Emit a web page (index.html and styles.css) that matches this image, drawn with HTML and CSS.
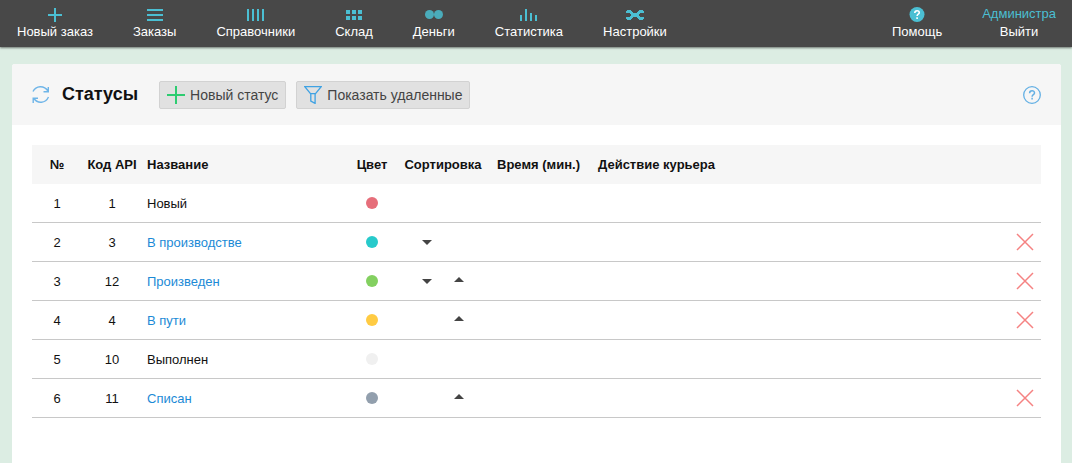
FILE: index.html
```html
<!DOCTYPE html>
<html lang="ru">
<head>
<meta charset="utf-8">
<title>Статусы</title>
<link rel="stylesheet" href="styles.css">
</head>
<body>
<header class="topbar">
  <nav class="menu">
    <a class="menu-item" href="#"><svg class="menu-icon" width="20" height="16" viewBox="0 0 20 16"><path d="M10 1v14M3 8h14" stroke-width="2"/></svg>Новый заказ</a>
    <a class="menu-item" href="#"><svg class="menu-icon" width="20" height="16" viewBox="0 0 20 16"><path d="M2 3h16M2 8h16M2 13h16" stroke-width="2"/></svg>Заказы</a>
    <a class="menu-item" href="#"><svg class="menu-icon" width="20" height="16" viewBox="0 0 20 16"><path d="M2 2v12M7 2v12M12 2v12M17 2v12" stroke-width="2"/></svg>Справочники</a>
    <a class="menu-item" href="#"><svg class="menu-icon" width="20" height="16" viewBox="0 0 20 16"><path d="M2 5h4M8 5h4M14 5h4M2 11h4M8 11h4M14 11h4" stroke-width="4"/></svg>Склад</a>
    <a class="menu-item" href="#"><svg class="menu-icon" width="20" height="16" viewBox="0 0 20 16"><g class="coin"><circle cx="5.500" cy="7.500" r="4.500"/><circle cx="14.500" cy="7.500" r="4.500"/></g></svg>Деньги</a>
    <a class="menu-item" href="#"><svg class="menu-icon" width="20" height="16" viewBox="0 0 20 16"><path d="M2 8v6M7 2v12M12 6v8M17 8v6" stroke-width="2"/></svg>Статистика</a>
    <a class="menu-item" href="#"><svg class="menu-icon" width="20" height="16" viewBox="0 0 20 16"><path class="wrench" d="M1 4h1V3h4v1h1v1h1v1h4V5h1V4h1V3h4v1h1v2h-4v1h-1v2h1v1h4v2h-1v1h-4v-1h-1v-1h-1v-1H8v1H7v1H6v1H2v-1H1v-2h4V9h1V7H5V6H1z"/></svg>Настройки</a>
  </nav>
  <div class="menu">
    <a class="menu-item" href="#"><svg class="menu-icon" width="20" height="16" viewBox="0 0 20 16"><circle class="help-disc" cx="10" cy="7.500" r="7.500"/><path class="help-mark" d="M7.800 6c0-3 4.500-3 4.500-.3 0 1.500-2.200 1.500-2.200 3.300M10.100 10.300v1.700" stroke-width="1.600"/></svg>Помощь</a>
    <a class="menu-item" href="#"><span class="user">Администра</span>Выйти</a>
  </div>
</header>
<main class="panel">
  <div class="panel-head">
    <button class="icon-button" type="button" aria-label="Обновить"><svg width="18" height="18" viewBox="0 0 18 18" fill="none" stroke="#6fb5e8" stroke-width="1.400"><path d="M1 5.500C4-.5 12-1 16 5M16.300 1v4.800H11.500M16.500 11C13.500 17.500 5.500 18 2 12.500M1.200 17v-4.800H6"/></svg></button>
    <h1 class="title">Статусы</h1>
    <div class="actions">
      <button class="button" type="button"><svg width="18" height="18" viewBox="0 0 18 18" stroke="#2ecc71" stroke-width="2"><path d="M9 0v18M0 9h18"/></svg>Новый статус</button>
      <button class="button" type="button"><svg width="18" height="18" viewBox="0 0 18 18" fill="none" stroke="#3fa2e3" stroke-width="1.300"><path d="M.8.700h16.400L11.500 7.700h-5zM6.800 7.700v7.500l4.300 2.200V7.700"/></svg>Показать удаленные</button>
    </div>
    <button class="icon-button" type="button" aria-label="Справка"><svg width="18" height="18" viewBox="0 0 18 18" fill="none" stroke="#64b0e4"><circle cx="9" cy="9" r="8.300" stroke-width="1.300"/><path d="M6.600 7.200c0-3.300 4.900-3.300 4.900-.3 0 1.900-2.400 1.700-2.400 3.800M9.100 11.800v1.700" stroke-width="1.500"/></svg></button>
  </div>
  <div class="content">
    <table class="statuses">
      <colgroup><col class="col-number"><col class="col-code"><col class="col-name"><col class="col-color"><col class="col-sort"><col class="col-time"><col><col class="col-remove"></colgroup>
      <thead>
        <tr><th>№</th><th>Код API</th><th class="left">Название</th><th>Цвет</th><th>Сортировка</th><th>Время (мин.)</th><th class="left action">Действие курьера</th><th></th></tr>
      </thead>
      <tbody>
        <tr><td>1</td><td>1</td><td class="left">Новый</td><td><span class="dot red"></span></td><td></td><td></td><td></td><td></td></tr>
        <tr><td>2</td><td>3</td><td class="left"><a href="#">В производстве</a></td><td><span class="dot teal"></span></td><td><div class="sort"><button class="down" type="button" aria-label="Ниже"></button></div></td><td></td><td></td><td><button class="remove" type="button" aria-label="Удалить"><svg width="18" height="18" viewBox="0 0 18 18"><path d="M1 1l16 16M17 1L1 17"/></svg></button></td></tr>
        <tr><td>3</td><td>12</td><td class="left"><a href="#">Произведен</a></td><td><span class="dot green"></span></td><td><div class="sort"><button class="down" type="button" aria-label="Ниже"></button><button class="up" type="button" aria-label="Выше"></button></div></td><td></td><td></td><td><button class="remove" type="button" aria-label="Удалить"><svg width="18" height="18" viewBox="0 0 18 18"><path d="M1 1l16 16M17 1L1 17"/></svg></button></td></tr>
        <tr><td>4</td><td>4</td><td class="left"><a href="#">В пути</a></td><td><span class="dot yellow"></span></td><td><div class="sort"><button class="up" type="button" aria-label="Выше"></button></div></td><td></td><td></td><td><button class="remove" type="button" aria-label="Удалить"><svg width="18" height="18" viewBox="0 0 18 18"><path d="M1 1l16 16M17 1L1 17"/></svg></button></td></tr>
        <tr><td>5</td><td>10</td><td class="left">Выполнен</td><td><span class="dot light"></span></td><td></td><td></td><td></td><td></td></tr>
        <tr><td>6</td><td>11</td><td class="left"><a href="#">Списан</a></td><td><span class="dot gray"></span></td><td><div class="sort"><button class="up" type="button" aria-label="Выше"></button></div></td><td></td><td></td><td><button class="remove" type="button" aria-label="Удалить"><svg width="18" height="18" viewBox="0 0 18 18"><path d="M1 1l16 16M17 1L1 17"/></svg></button></td></tr>
      </tbody>
    </table>
  </div>
</main>
</body>
</html>
```
FILE: styles.css
```css
* { box-sizing: border-box; }
body {
  margin: 0;
  min-height: 100vh;
  display: flex;
  flex-direction: column;
  background: #dcede3;
  color: #111;
  font: 13px/16px "Liberation Sans", Arial, sans-serif;
}
a { color: #1c8ad6; text-decoration: none; }
button { font-family: inherit; border: 0; padding: 0; background: none; cursor: pointer; }
svg { display: block; }

.topbar {
  display: flex;
  justify-content: space-between;
  padding: 7px 16px 7px 17px;
  background: #484848;
  box-shadow: 0 1px 2px rgba(0, 0, 0, .5);
}
.menu { display: flex; gap: 40px; }
.menu-item {
  display: flex;
  flex-direction: column;
  align-items: center;
  gap: 1px;
  color: #fff;
  white-space: nowrap;
}
.menu-icon { fill: none; stroke: #4bbfd3; }
.coin { fill: #4aacbb; stroke: none; }
.wrench { fill: #4bbfd3; stroke: none; }
.help-disc { fill: #4bbfd3; stroke: none; }
.help-mark { stroke: #fff; }
.user { color: #4bbfd3; line-height: 14px; padding-bottom: 2px; }

.panel {
  flex: 1;
  margin: 17px 11px 0 12px;
  background: #fff;
  border-radius: 3px 3px 0 0;
}
.panel-head {
  display: flex;
  align-items: center;
  padding: 16px 20px;
  background: #f6f6f6;
  border-radius: 3px 3px 0 0;
}
.title { margin: 0 21px 0 12px; font-size: 18px; line-height: 29px; }
.actions { flex: 1; display: flex; gap: 10px; }
.button {
  display: flex;
  align-items: center;
  gap: 5px;
  height: 28px;
  padding: 0 7px;
  border: 1px solid #d2d2d2;
  border-radius: 2px;
  background: #e1e1e1;
  color: #444;
  font-size: 14px;
  white-space: nowrap;
}
.content { padding: 20px; }

.statuses { width: 100%; table-layout: fixed; border-collapse: separate; border-spacing: 0; }
.col-number, .col-color { width: 50px; }
.col-code { width: 60px; }
.col-name { width: 205px; }
.col-sort { width: 92px; }
.col-time { width: 99px; }
.col-remove { width: 32px; }
th, td { height: 39px; padding: 0; text-align: center; vertical-align: middle; white-space: nowrap; }
th { background: #f6f6f6; }
td { border-bottom: 1px solid #c8c8c8; }
td:nth-child(-n+3) { padding-top: 2px; }
.left { padding-left: 5px; text-align: left; }
.action { padding-left: 10px; }
.dot { display: block; width: 12px; height: 12px; margin: 0 auto; border-radius: 50%; }
.red { background: #e66e7a; }
.teal { background: #27cacb; }
.green { background: #83d060; }
.yellow { background: #ffcb43; }
.light { background: #f0f0f0; }
.gray { background: #929fad; }
.sort { display: grid; grid-template-columns: 32px 32px; justify-content: center; }
.down, .up { display: flex; align-items: center; justify-content: center; height: 16px; }
.up { grid-column: 2; padding-bottom: 3px; }
.down::before, .up::before { content: ""; border: 5px solid transparent; }
.down::before { border-top-color: #444; border-bottom: 0; }
.up::before { border-bottom-color: #444; border-top: 0; }
.remove { display: block; margin: 0 auto; }
.remove svg { fill: none; stroke: #f58282; stroke-width: 1.5; }
```
